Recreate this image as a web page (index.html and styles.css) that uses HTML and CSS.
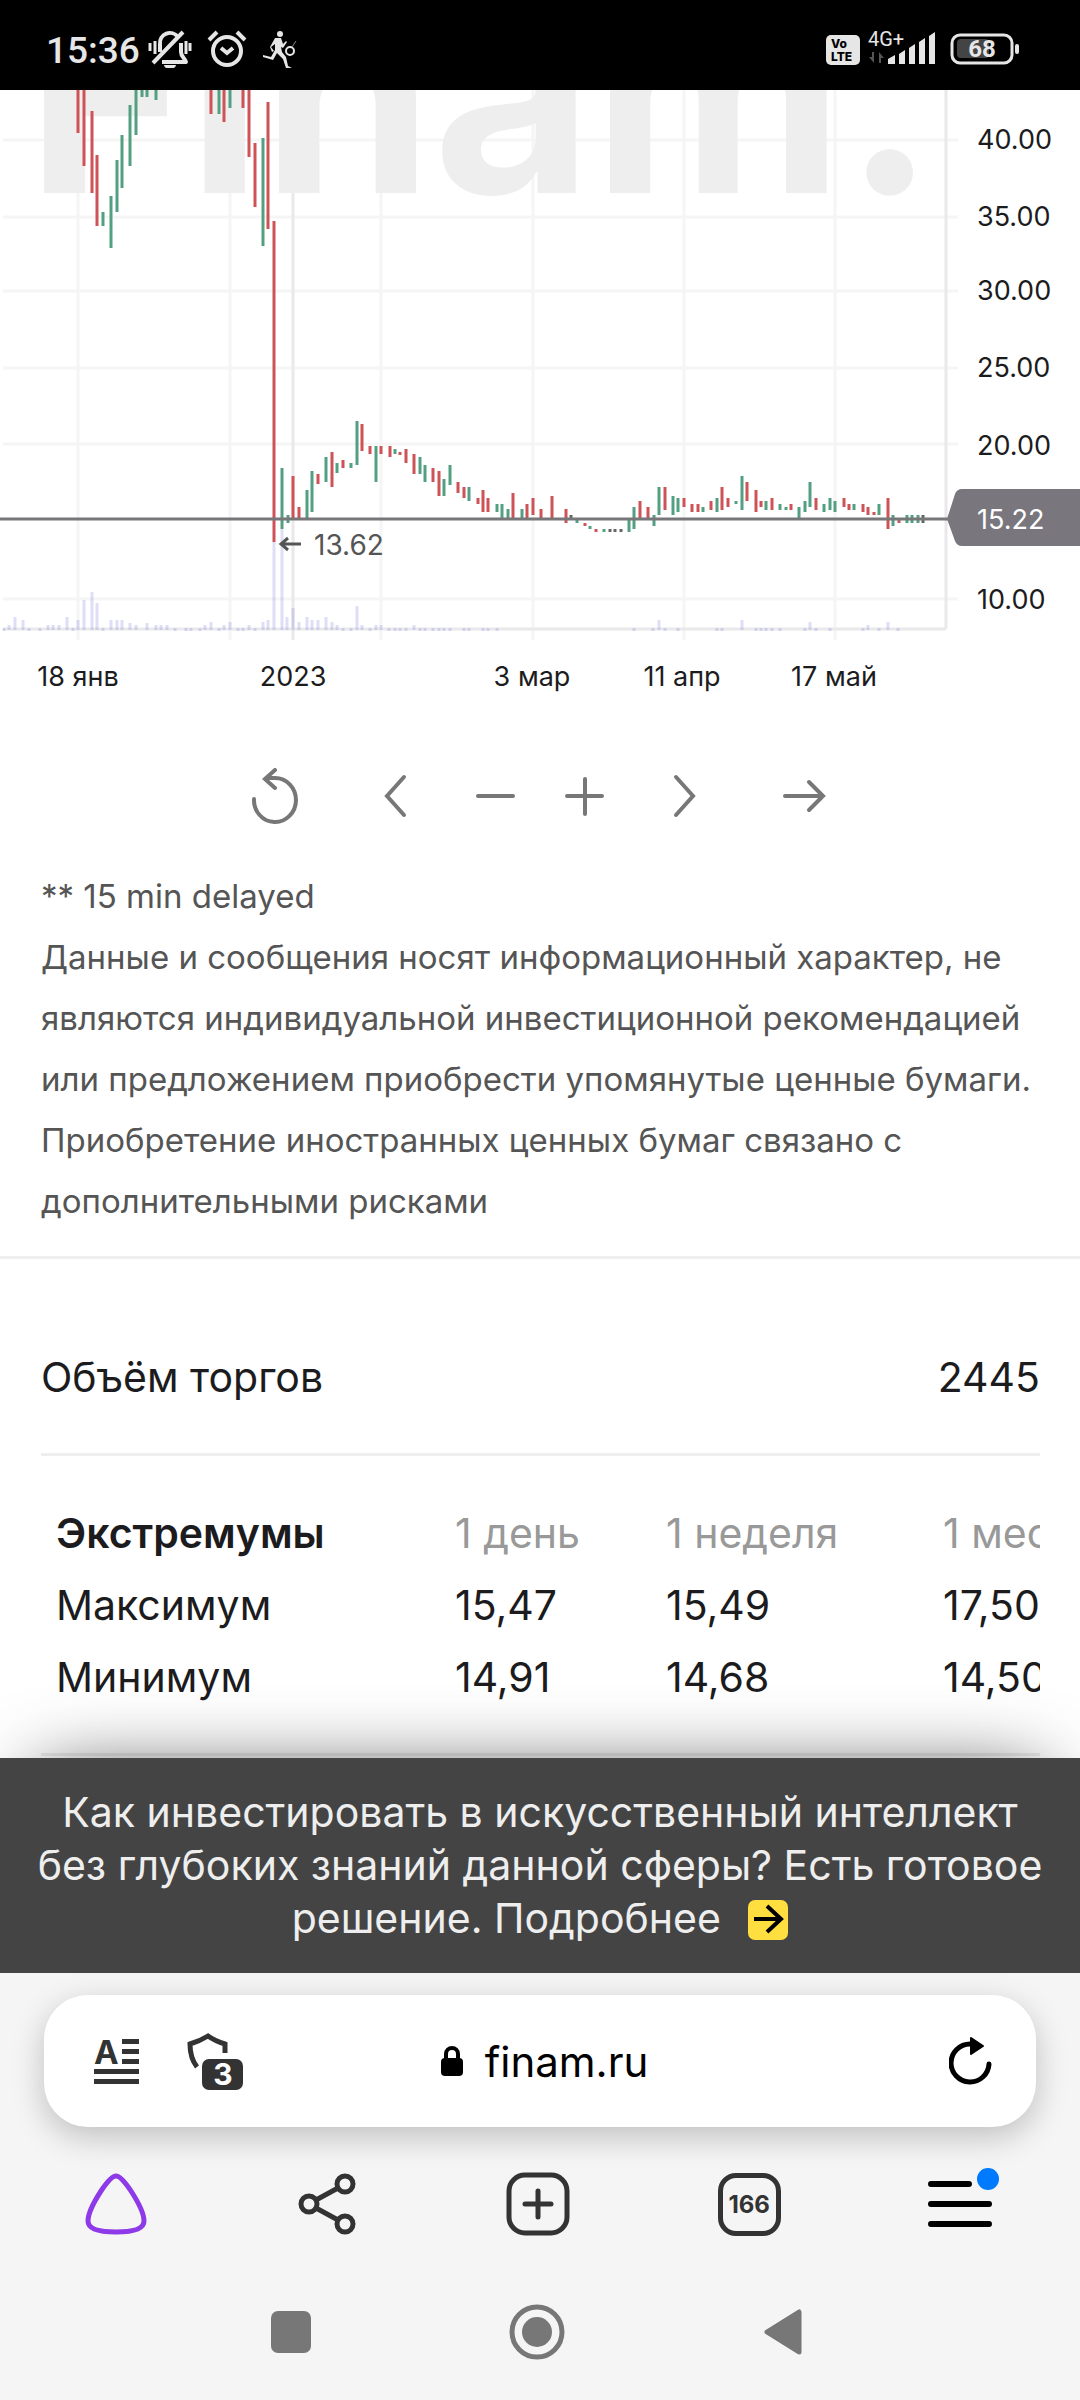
FILE: index.html
```
<!DOCTYPE html>
<html lang="ru">
  <head>
    <meta charset="utf-8">
    <meta name="viewport" content="width=device-width, initial-scale=1">
    <title>finam.ru</title>
    <link rel="stylesheet" href="styles.css">
  </head>
  <body>
    <header class="status-bar">
      <div class="status-group">
        <span class="clock">15:36</span>
        <svg class="status-icon" width="44" height="38" viewBox="0 0 44 38" fill="none" stroke="#e6e6e6" stroke-width="3">
          <path d="M12 22V14a10 10 0 0 1 18-7" stroke-width="4"/>
          <path d="M33 13v9c0 5 4 6 5 10H14" stroke-width="4" stroke-linejoin="round"/>
          <path d="M5 33L35 2" stroke-width="4"/>
          <path d="M16 35h12a6 4 0 0 1-12 0z" fill="#e6e6e6" stroke="none"/>
          <path d="M2 13v8M7 11v13M38 11v13M42 13v8"/>
        </svg>
        <svg class="status-icon" width="40" height="38" viewBox="0 0 40 38" fill="none" stroke="#e6e6e6" stroke-width="4">
          <circle cx="20" cy="21" r="14"/>
          <path d="M14 18l6 5 6-5M2 10l8-8M38 10l-8-8"/>
        </svg>
        <svg class="status-icon" width="36" height="38" viewBox="0 0 36 38" fill="#e6e6e6">
          <circle cx="18" cy="4" r="3"/>
          <path d="M13 8l6 0 2 6 3-3 1 1-4 6-2-1 1 5 4 5 2 9 4 2h-6l-3-9-6-6-4 7-10-3 0-2 8 2 4-7 0-6-4 3 3 4-2 1-2-5z"/>
          <circle cx="28" cy="21" r="4" fill="none" stroke="#e6e6e6" stroke-width="2"/>
          <path d="M30 17l4-6" stroke="#888" stroke-width="1"/>
        </svg>
      </div>
      <div class="status-group">
        <span class="volte">Vo<br>LTE</span>
        <svg class="signal" width="70" height="38" viewBox="0 0 70 38" fill="#e6e6e6">
          <text x="0" y="16" class="signal-text">4G+</text>
          <path d="M6 22v11L1 27h3v-5zM11 33V22l5 6h-3v5z" fill="#555"/>
          <path d="M20 34v-5l7-4v9zM31 34V24l6-4v14zM41 34V18l6-4v20zM51 34V12l6-4v26zM61 34V6l6-4v32z"/>
        </svg>
        <svg class="battery" width="70" height="32" viewBox="0 0 70 32">
          <rect x="7" y="6" width="32" height="19" rx="4" fill="#444"/>
          <rect x="2" y="2" width="60" height="28" rx="8" fill="none" stroke="#e6e6e6" stroke-width="3"/>
          <rect x="65" y="11" width="4" height="10" rx="2" fill="#e6e6e6"/>
          <text x="32" y="24" class="battery-text">68</text>
        </svg>
      </div>
    </header>

    <main class="page">
      <svg class="chart" viewBox="0 90 1080 640" role="img" aria-label="График котировок">
        <!-- grid -->
        <path class="grid" d="M3 140H958M3 217H958M3 291H958M3 368H958M3 444H958M3 599H958M78 90V640M230 90V640M381 90V640M533 90V640M684 90V640M835 90V640"/>
        <path class="axis" d="M293 90V640M3 629H946M946 90V629"/>
        <text class="watermark" x="26" y="193">Finam.</text>

        <!-- volume -->
        <path class="volume" d="M4 628v3M9 625v5M15 617v13M23 620v10M29 628v3M40 628v3M48 625v5M53 625v5M59 625v5M67 617v13M73 628v3M78 620v10M84 600v30M92 592v38M97 603v27M103 628v3M111 620v10M117 620v10M122 620v10M130 623v7M136 625v5M147 623v7M156 625v5M161 625v5M167 625v5M175 628v3M186 628v3M191 628v3M200 628v3M205 625v5M211 622v8M219 628v3M224 625v5M230 622v8M238 628v3M243 628v3M249 625v5M255 628v3M263 622v8M268 620v10M274 542v88M282 529v101M287 617v13M293 608v22M299 622v8M307 617v13M312 620v10M318 620v10M326 617v13M332 622v8M337 625v5M343 628v3M351 628v3M357 606v24M362 625v5M370 628v3M376 625v5M381 625v5M389 628v3M395 628v3M400 628v3M406 628v3M414 625v5M420 628v3M425 628v3M433 628v3M439 628v3M444 628v3M450 628v3M464 628v3M469 628v3M483 628v3M488 628v3M497 628v3M634 628v3M653 628v3M659 620v10M665 628v3M678 628v3M717 628v3M722 628v3M742 620v10M756 628v3M761 628v3M766 628v3M772 628v3M780 628v3M805 628v3M810 622v8M816 628v3M830 628v3M863 628v3M868 625v5M879 628v3M888 622v8M898 628v3"/>

        <!-- price bars -->
        <path class="down" d="M78 90V133M84 90V166M92 111V193M97 155V226M211 90V114M224 90V122M243 90V108M249 90V157M255 143V207M268 102V229M274 221V542M293 476V519M299 507V519M318 474V484M332 452V487M343 460V468M362 424V451M370 446V454M381 446V454M390 446V457M400 452V455M406 449V463M414 454V474M433 468V482M439 471V496M458 482V493M464 487V498M478 498V504M483 490V512M488 498V512M513 493V519M527 504V519M533 498V515M541 509V519M552 496V519M566 509V523M585 523V526M596 529V532M640 501V519M648 507V519M665 487V510M684 498V507M692 504V512M698 504V512M711 501V510M722 487V510M728 498V507M747 482V501M756 490V512M761 501V507M772 498V510M791 504V510M816 498V510M844 498V507M849 504V510M863 504V512M868 507V515M874 512V515M888 498V529M899 520V523"/>
        <path class="up" d="M103 212V226M111 196V248M117 160V212M122 135V188M130 105V166M136 90V135M142 90V97M147 90V97M156 90V100M219 90V114M230 90V108M263 138V246M282 468V529M288 515V523M307 490V519M312 471V512M326 457V482M337 463V473M351 463V468M357 421V465M376 446V482M395 449V454M420 457V474M425 465V482M444 479V496M450 465V485M469 487V501M497 504V512M502 504V519M508 509V519M522 509V519M577 520V523M590 526V529M604 529V532M629 520V532M634 507V529M654 515V526M659 487V515M673 496V515M678 498V512M703 507V512M717 498V512M736 501V504M742 476V510M766 501V510M780 504V510M786 507V510M799 507V519M805 501V512M810 482V507M824 504V512M830 498V510M835 501V512M854 504V510M879 504V515M893 515V526M907 515V523M912 515V523M918 515V523"/>
        <path class="flat" d="M571 515V518M610 529V532M615 529V532M621 529V532M923 515V523"/>

        <path class="price-line" d="M0 519H950"/>
        <path class="price-tag" d="M947 519l8-25q2-5 7-5H1080v57H962q-5 0-7-5z"/>
        <path class="low-arrow" d="M301 544H281M288 538l-7 6 7 6"/>
        <text class="low-text" x="314" y="555">13.62</text>

        <g class="price-labels">
          <text x="977" y="149">40.00</text>
          <text x="977" y="226">35.00</text>
          <text x="977" y="300">30.00</text>
          <text x="977" y="377">25.00</text>
          <text x="977" y="455">20.00</text>
          <text class="current" x="977" y="529">15.22</text>
          <text x="977" y="609">10.00</text>
        </g>
        <g class="date-labels">
          <text x="78" y="686">18 янв</text>
          <text x="293" y="686">2023</text>
          <text x="532" y="686">3 мар</text>
          <text x="682" y="686">11 апр</text>
          <text x="834" y="686">17 май</text>
        </g>
      </svg>

      <div class="chart-tools">
        <button class="tool tool-edge" aria-label="Сбросить">
          <svg width="48" height="56" viewBox="0 0 48 56"><path d="M3 31a21 22 0 1 0 21-21H15M24 2l-10 9 10 9"/></svg>
        </button>
        <button class="tool tool-step" aria-label="Назад">
          <svg width="24" height="44" viewBox="0 0 24 44"><path d="M21 3L4 22l17 19"/></svg>
        </button>
        <button class="tool" aria-label="Уменьшить">
          <svg width="40" height="40" viewBox="0 0 40 40"><path d="M3 20h35"/></svg>
        </button>
        <button class="tool" aria-label="Увеличить">
          <svg width="40" height="40" viewBox="0 0 40 40"><path d="M2 20h35M20 3v35"/></svg>
        </button>
        <button class="tool tool-step" aria-label="Вперёд">
          <svg width="24" height="44" viewBox="0 0 24 44"><path d="M3 3l17 19L3 41"/></svg>
        </button>
        <button class="tool tool-edge" aria-label="В конец">
          <svg width="44" height="40" viewBox="0 0 44 40"><path d="M2 20h38M26 6l14 14-14 14"/></svg>
        </button>
      </div>

      <p class="note">** 15 min delayed<br>Данные и сообщения носят информационный характер, не являются индивидуальной инвестиционной рекомендацией или предложением приобрести упомянутые ценные бумаги. Приобретение иностранных ценных бумаг связано с дополнительными рисками</p>

      <section class="stats">
        <div class="volume-row">
          <span>Объём торгов</span>
          <span>2445</span>
        </div>
        <div class="extremes">
          <table class="extremes-table">
            <thead>
              <tr><th class="title" scope="col">Экстремумы</th><th scope="col">1 день</th><th scope="col">1 неделя</th><th scope="col">1 месяц</th></tr>
            </thead>
            <tbody>
              <tr><td>Максимум</td><td>15,47</td><td>15,49</td><td>17,50</td></tr>
              <tr><td>Минимум</td><td>14,91</td><td>14,68</td><td>14,50</td></tr>
            </tbody>
          </table>
        </div>
      </section>
    </main>

    <a class="promo" href="#">Как инвестировать в искусственный интеллект без глубоких знаний данной сферы? Есть готовое решение. Подробнее <svg class="promo-arrow" width="40" height="40" viewBox="0 0 40 40"><rect width="40" height="40" rx="7" fill="#ffdf40"/><path d="M6 19h27M19 6l14 13-14 13" fill="none" stroke="#000" stroke-width="4"/></svg></a>

    <footer class="browser">
      <div class="address-bar">
        <div class="address-side">
          <button class="icon-btn" aria-label="Режим чтения">
            <svg width="46" height="46" viewBox="0 0 46 46" fill="#333">
              <text x="0" y="26" class="reader-letter">A</text>
              <path d="M28 1h17v5H28zM28 11h17v5H28zM28 21h17v5H28zM0 31h45v5H0zM0 41h45v5H0z"/>
            </svg>
          </button>
          <button class="icon-btn" aria-label="Защита">
            <svg width="56" height="58" viewBox="0 0 56 58">
              <path d="M38 21v-9q-10-3-17-8-8 5-18 8 0 14 7 23" fill="none" stroke="#333" stroke-width="5"/>
              <rect x="15" y="27" width="41" height="31" rx="7" fill="#333"/>
              <text x="36" y="53" class="shield-count">3</text>
            </svg>
          </button>
        </div>
        <a class="address" href="#">
          <svg width="22" height="30" viewBox="0 0 22 30"><path d="M5 13V8a6 6 0 0 1 12 0v5" fill="none" stroke="#000" stroke-width="4"/><rect y="12" width="22" height="18" rx="4"/></svg>
          finam.ru
        </a>
        <div class="address-side address-end">
          <button class="icon-btn" aria-label="Обновить">
            <svg width="46" height="50" viewBox="0 0 46 50"><path d="M21 8a19 19 0 1 0 19 20" fill="none" stroke="#000" stroke-width="5" stroke-linecap="round"/><path d="M22 2l12 8-12 8z" stroke="#000" stroke-width="2" stroke-linejoin="round"/></svg>
          </button>
        </div>
      </div>

      <nav class="tab-bar">
        <button class="icon-btn" aria-label="Алиса">
          <svg width="64" height="64" viewBox="0 0 64 64"><path d="M32 4q-5 0-15 15Q4 39 4 49q0 11 28 11t28-11q0-10-13-30Q37 4 32 4z" fill="none" stroke="#8e3ae8" stroke-width="5"/></svg>
        </button>
        <button class="icon-btn" aria-label="Поделиться">
          <svg width="60" height="64" viewBox="0 0 60 64" fill="none" stroke="#333" stroke-width="5"><circle cx="12" cy="32" r="8"/><circle cx="48" cy="12" r="8"/><circle cx="48" cy="52" r="8"/><path d="M19 28l22-12M19 36l22 12"/></svg>
        </button>
        <button class="icon-btn" aria-label="Новая вкладка">
          <svg width="64" height="64" viewBox="0 0 64 64" fill="none" stroke="#333" stroke-width="5"><rect x="3" y="3" width="58" height="58" rx="16"/><path d="M19 32h26M32 19v26" stroke-linecap="round"/></svg>
        </button>
        <button class="tabs-count" aria-label="Вкладки">166</button>
        <button class="icon-btn menu" aria-label="Меню">
          <svg width="64" height="52" viewBox="0 0 64 52" stroke="#000" stroke-width="6" stroke-linecap="round"><path d="M3 6h38M3 26h58M3 46h58"/></svg>
          <span class="menu-dot"></span>
        </button>
      </nav>

      <nav class="system-bar">
        <button class="icon-btn" aria-label="Недавние">
          <svg width="40" height="42" viewBox="0 0 40 42"><rect width="40" height="42" rx="7" fill="#777"/></svg>
        </button>
        <button class="icon-btn" aria-label="Домой">
          <svg width="56" height="56" viewBox="0 0 56 56"><circle cx="28" cy="28" r="25" fill="none" stroke="#777" stroke-width="5"/><circle cx="28" cy="28" r="15" fill="#777"/></svg>
        </button>
        <button class="icon-btn" aria-label="Назад">
          <svg width="38" height="46" viewBox="0 0 38 46"><path d="M3 23L35 3v40z" fill="#777" stroke="#777" stroke-width="5" stroke-linejoin="round"/></svg>
        </button>
      </nav>
    </footer>
  </body>
</html>
```
FILE: styles.css
```
* {
  box-sizing: border-box;
}
body {
  margin: 0;
  min-height: 100vh;
  display: flex;
  flex-direction: column;
  background-color: #fff;
  color: #1c1c1e;
  font-family: Inter, sans-serif;
  font-size: 41px;
}
svg {
  display: block;
}
button {
  border: none;
  padding: 0;
  background: none;
  font-family: inherit;
  cursor: pointer;
}

/* phone status bar */
.status-bar {
  display: flex;
  justify-content: space-between;
  height: 90px;
  padding: 30px 60px 0 46px;
  background-color: #000;
  color: #e6e6e6;
  font-family: Roboto, sans-serif;
}
.status-group {
  display: flex;
  align-items: flex-start;
}
.clock {
  font-size: 37px;
  font-weight: 500;
  line-height: 42px;
  margin-right: 8px;
}
.status-icon {
  margin-right: 15px;
}
.volte {
  width: 34px;
  margin: 5px 8px 0 0;
  padding: 2px 0 2px 5px;
  border-radius: 5px;
  background-color: #e6e6e6;
  color: #000;
  font-family: Inter, sans-serif;
  font-size: 12px;
  font-weight: 800;
  line-height: 13px;
}
.signal {
  overflow: visible;
}
.signal-text {
  font-size: 20px;
}
.battery {
  margin: 3px 0 0 12px;
}
.battery-text {
  fill: #e6e6e6;
  font-size: 24px;
  font-weight: 700;
  text-anchor: middle;
}

/* chart */
.chart {
  width: 100%;
  font-size: 27px;
}
.grid {
  stroke: #f5f5f5;
  stroke-width: 3;
}
.axis {
  fill: none;
  stroke: #e9e9ec;
  stroke-width: 3;
}
.watermark {
  fill: #eee;
  font-size: 275px;
  font-weight: 700;
}
.volume,
.down,
.up,
.flat {
  fill: none;
  stroke-width: 3;
}
.volume {
  stroke: #5a5ad2;
  stroke-opacity: 0.2;
}
.down {
  stroke: #cd5357;
}
.up {
  stroke: #529f82;
}
.flat {
  stroke: #666;
}
.price-line {
  stroke: #77777a;
  stroke-width: 3;
}
.price-tag {
  fill: #79767e;
}
.low-arrow {
  fill: none;
  stroke: #555;
  stroke-width: 3;
}
.low-text {
  fill: #555;
  font-size: 28px;
}
.price-labels .current {
  fill: #fff;
}
.price-labels,
.date-labels {
  fill: #1c1c1e;
}
.date-labels {
  text-anchor: middle;
}
.chart-tools {
  display: flex;
  justify-content: center;
  padding-top: 32px;
}
.tool {
  width: 90px;
  height: 68px;
  display: flex;
  align-items: center;
  justify-content: center;
}
.tool svg {
  fill: none;
  stroke: #777;
  stroke-width: 4;
  stroke-linecap: round;
}
.tool-step {
  width: 110px;
}
.tool-edge {
  width: 130px;
}

.note {
  margin: 0;
  padding: 36px 40px 24px 41px;
  border-bottom: 3px solid #eee;
  color: #555;
  font-size: 33px;
  line-height: 61px;
}

/* trading stats */
.stats {
  padding: 0 40px 2px 41px;
}
.volume-row {
  display: flex;
  justify-content: space-between;
  padding: 88px 0 46px;
  border-bottom: 3px solid #eee;
  line-height: 60px;
}
.extremes {
  overflow: hidden;
  padding: 41px 0 40px;
  border-bottom: 3px solid #eee;
}
.extremes-table {
  width: 1200px;
  table-layout: fixed;
  border-collapse: collapse;
  line-height: 72px;
}
.extremes-table th,
.extremes-table td {
  padding: 0 0 0 15px;
  text-align: left;
  font-weight: 400;
}
.extremes-table th {
  width: 277px;
  color: #999;
}
.extremes-table .title {
  width: 399px;
  color: #1c1c1e;
  font-weight: 600;
}
.extremes-table th:nth-child(2) {
  width: 211px;
}
.extremes-table th:last-child {
  width: 313px;
}

.promo {
  padding: 28px 30px;
  background-color: #444;
  box-shadow: 0 -20px 80px -40px rgba(0, 0, 0, 0.8);
  color: #eee;
  line-height: 53px;
  text-align: center;
  text-decoration: none;
}
.promo-arrow {
  display: inline-block;
  margin-left: 16px;
  vertical-align: -7px;
}

/* browser controls */
.browser {
  flex: 1;
  padding-top: 22px;
  background-color: #f5f5f5;
}
.address-bar {
  display: grid;
  grid-template-columns: 1fr auto 1fr;
  align-items: center;
  height: 132px;
  margin: 0 44px;
  padding: 0 41px 0 50px;
  border-radius: 44px;
  background-color: #fff;
  box-shadow: 0 10px 32px rgba(0, 0, 0, 0.22);
}
.address-side {
  display: flex;
  align-items: center;
  gap: 47px;
}
.address-end {
  justify-content: flex-end;
}
.icon-btn {
  position: relative;
  display: flex;
  align-items: center;
  justify-content: center;
}
.reader-letter {
  font-size: 33px;
  font-weight: 700;
}
.shield-count {
  fill: #fff;
  font-size: 30px;
  font-weight: 700;
  text-anchor: middle;
}
.address {
  display: flex;
  align-items: center;
  gap: 22px;
  color: #000;
  font-size: 42px;
  text-decoration: none;
}
.tab-bar {
  display: grid;
  grid-template-columns: repeat(5, 1fr);
  align-items: center;
  justify-items: center;
  padding: 45px 14px 0 10px;
}
.tabs-count {
  width: 63px;
  height: 63px;
  border: 5px solid #333;
  border-radius: 18px;
  color: #333;
  font-size: 24px;
  font-weight: 700;
  text-align: center;
}
.menu-dot {
  position: absolute;
  top: -10px;
  right: -7px;
  width: 22px;
  height: 22px;
  border-radius: 50%;
  background-color: #007aff;
}
.system-bar {
  display: grid;
  grid-template-columns: repeat(3, 246px);
  align-items: center;
  justify-content: center;
  justify-items: center;
  padding: 68px 6px 0 0;
}
```
